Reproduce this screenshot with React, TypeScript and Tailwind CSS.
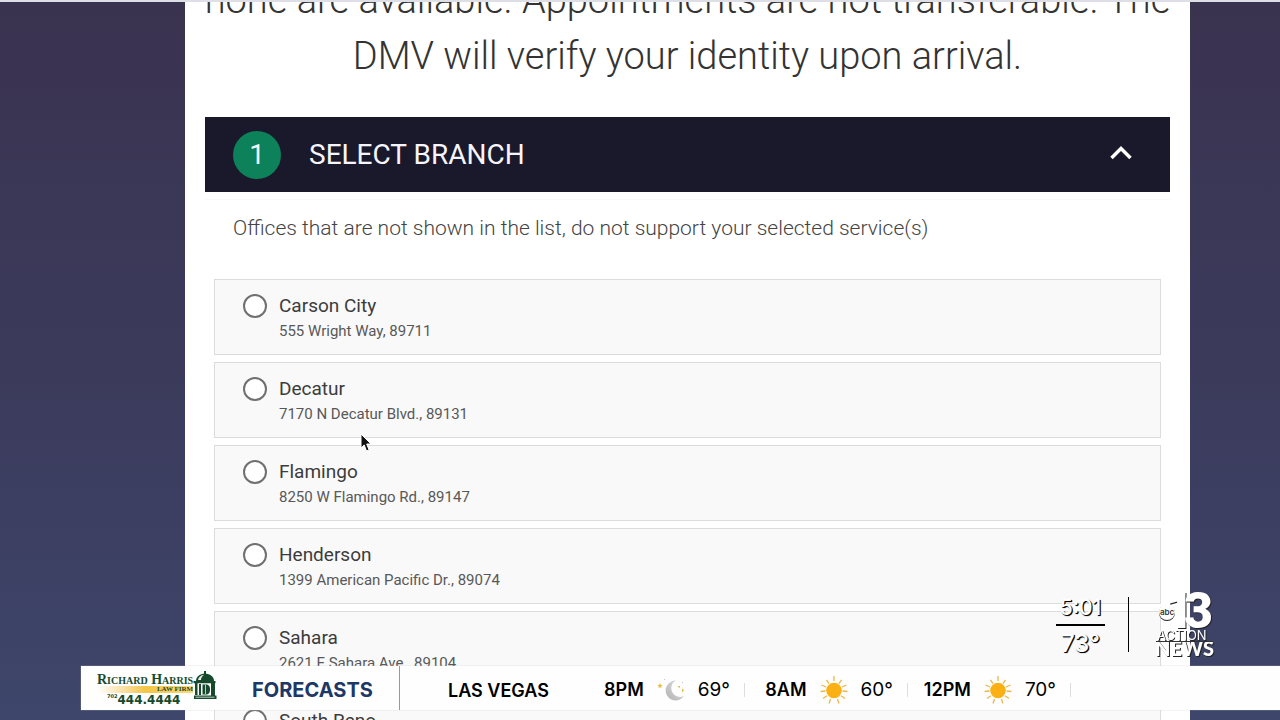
type Branch = { id: string; name: string; address: string };
type Forecast = { time: string; temp: string; icon: 'moon' | 'sun' };

const branches: Branch[] = [
  { id: 'carson', name: 'Carson City', address: '555 Wright Way, 89711' },
  { id: 'decatur', name: 'Decatur', address: '7170 N Decatur Blvd., 89131' },
  { id: 'flamingo', name: 'Flamingo', address: '8250 W Flamingo Rd., 89147' },
  { id: 'henderson', name: 'Henderson', address: '1399 American Pacific Dr., 89074' },
  { id: 'sahara', name: 'Sahara', address: '2621 E Sahara Ave., 89104' },
  { id: 'south-reno', name: 'South Reno', address: '' },
];

const forecasts: Forecast[] = [
  { time: '8PM', temp: '69°', icon: 'moon' },
  { time: '8AM', temp: '60°', icon: 'sun' },
  { time: '12PM', temp: '70°', icon: 'sun' },
];

function SunIcon() {
  return (
    <svg viewBox="0 0 28 28" className="size-7" aria-hidden="true">
      <g stroke="#e9b949" strokeWidth="1.3">
        <path d="M14 0v5M6.5 4l2.6 3.6M21.5 4l-2.6 3.6M1.5 9l4.5 2M26.500 9l-4.500 2M.5 15.500l5-.5M27.500 15.500l-5-.5M3 22.500l4-2.800M25 22.500l-4-2.800M9 27.500l1.600-4.500M19 27.500l-1.600-4.500" />
      </g>
      <circle cx="14" cy="14.500" r="7.800" fill="#fbb116" />
    </svg>
  );
}

function MoonIcon() {
  return (
    <svg viewBox="0 0 28 24" className="h-6 w-7" aria-hidden="true">
      <defs>
        <linearGradient id="moon" x1="1" y1="0" x2="0" y2="1">
          <stop offset="0" stopColor="#e2e2e2" />
          <stop offset="1" stopColor="#b2b2b2" />
        </linearGradient>
      </defs>
      <path d="M19 2.500A10 10 0 1 0 27 18A8.500 8.500 0 0 1 19 2.500Z" fill="url(#moon)" />
      <path d="M3 5l.7 1.700 1.900.2-1.400 1.300.4 1.900L3 9.200l-1.600.9.4-1.900L.4 6.900l1.900-.2Z" fill="#e6bf42" />
      <path d="M20.500 8h2.500l-.5 2.200ZM25.500 10.500l1.300 1-.8 2.800-1.200-1Z" fill="#dcc030" />
      <path d="M7 1.500h1M25 4.500h1" stroke="#c4c4c4" />
    </svg>
  );
}

function DomeIcon() {
  return (
    <svg viewBox="0 0 24 30" className="-mt-1 h-[30px] w-6 shrink-0" aria-hidden="true">
      <path d="M11 4V1h2v3" fill="#174a2c" />
      <path d="M3 11C3 6.500 7 3.800 12 3.800S21 6.500 21 11Z" fill="#174a2c" />
      <path d="M5 10c.5-3 3-5 6-5-2 1.200-3 3-3 5Z" fill="#e8efe9" />
      <path d="M.5 11h22v2.300H.5ZM2 13h2.500v12H2ZM18 13h4v13h-4ZM6 14h2v11H6ZM1 25.500h22.500V29H1Z" fill="#174a2c" />
      <path d="M9.500 14.500h3c3.500 0 4.500 2 4.500 5s-1 5-4.500 5h-3Z" fill="#174a2c" />
      <path d="M2.500 27.200h19M12.500 15v9" stroke="#e8efe9" strokeWidth=".8" />
    </svg>
  );
}

function BranchOption({ branch }: { branch: Branch }) {
  return (
    <li className="flex min-h-[76px] gap-3 border border-[#dcdcdc] bg-[#f9f9f9] px-7 pt-[14px]">
      <input
        type="radio"
        id={branch.id}
        name="branch"
        className="size-6 shrink-0 appearance-none rounded-full border-2 border-[#707070] bg-white checked:border-8"
      />
      <label htmlFor={branch.id} className="flex flex-col text-[#3c3c3c]">
        <span className="text-[19px] leading-6">{branch.name}</span>
        <span className="text-[15px] leading-[26px] text-[#585858]">{branch.address}</span>
      </label>
    </li>
  );
}

function StationBug() {
  return (
    <aside className="absolute right-[65px] bottom-[62px] flex items-center font-['Inter',sans-serif] text-white">
      <div className="flex w-[49px] flex-col items-center text-[21px] leading-6 font-medium [text-shadow:1px_1px_1px_#000,1px_1px_0_#222]">
        <time className="pt-1">5:01</time>
        <hr className="mt-1 mb-[6px] w-full border-t-2 border-black" />
        <span className="text-[24px]">73°</span>
      </div>
      <span className="mr-[26px] ml-[23px] h-[55px] w-px bg-black" />
      <svg viewBox="0 0 60 68" className="h-[68px] w-[60px] overflow-visible" role="img" aria-label="abc 13 Action News">
        <g fill="#fff" className="[filter:drop-shadow(1px_1px_0.5px_#222)]">
          <g fontFamily="Roboto, sans-serif" fontWeight="900" fontSize="50">
            <text x="10" y="38">1</text>
            <text x="29" y="38">3</text>
          </g>
          <text x="2" y="50" fontFamily="Inter, sans-serif" fontSize="13">ACTION</text>
          <text x="0" y="66" fontFamily="Lato, sans-serif" fontWeight="900" fontSize="20">NEWS</text>
        </g>
        <circle cx="12" cy="22" r="8" fill="#fff" className="[filter:drop-shadow(0_1px_0.5px_#222)]" />
        <path d="M1 51.500h57" stroke="#333" />
        <text x="5" y="25" fontFamily="Inter, sans-serif" fontSize="8" fontWeight="600" fill="#333">abc</text>
      </svg>
    </aside>
  );
}

function Ticker() {
  return (
    <footer className="absolute right-0 bottom-[10px] left-[81px] flex h-[44px] items-center bg-[#fefefe] font-['Inter',sans-serif] text-black shadow-[0_0_1px_#bbb]">
      <div className="flex w-[159px] items-start pt-1 pl-4">
        <div className="flex flex-col font-['Liberation_Serif',serif] font-bold text-[#174a2c]">
          <span className="text-[14px] leading-3 whitespace-nowrap [font-variant:small-caps]">Richard Harris</span>
          <span className="bg-linear-to-r from-white via-[#f3c545] to-[#f8d979] text-right text-[7px] leading-[7px]">LAW FIRM</span>
          <span className="flex pl-[10px] font-['DejaVu_Sans',sans-serif] text-[12px] leading-[14px]">
            <sup className="text-[5px] leading-3">702</sup>444.4444
          </span>
        </div>
        <DomeIcon />
      </div>
      <h2 className="flex h-full w-[160px] items-center border-r border-[#999] pt-1 pl-3 text-[20px] font-bold text-[#1d3767]">FORECASTS</h2>
      <strong className="w-[182px] pt-1 pl-12 text-[18px] font-semibold">LAS VEGAS</strong>
      <ul className="flex items-center pt-1">
        {forecasts.map((item) => (
          <li key={item.time} className="flex w-[163px] items-center justify-end gap-[13px] border-r border-[#ddd] pr-[14px] text-[18px] leading-[14px]">
            <strong className="font-semibold">{item.time}</strong>
            <span className="-my-2">{item.icon === 'moon' ? <MoonIcon /> : <SunIcon />}</span>
            <span className="text-[19px]">{item.temp}</span>
          </li>
        ))}
      </ul>
    </footer>
  );
}

export default function App() {
  return (
    <div className="relative h-screen overflow-hidden border-t-2 border-[#dedee6] bg-linear-to-b from-[#3a3350] via-[#3b3a5b] to-[#3e466b] pr-[90px] pl-[185px] font-['Roboto',sans-serif]">
      <main className="min-h-full bg-white px-5">
        <div className="-mx-3 flex h-[115px] items-end justify-center overflow-hidden pb-[33px]">
          <p className="text-center text-[38px] leading-[56px] font-light text-[#333]">
            none are available. Appointments are not transferable. The
            <br />
            DMV will verify your identity upon arrival.
          </p>
        </div>
        <section>
          <h1>
            <button type="button" aria-expanded="true" className="flex h-[75px] w-full items-center bg-[#1a182b] pr-[37px] pl-7 text-[28px] text-[#f5f5fb]">
              <span className="mr-7 flex size-12 items-center justify-center rounded-full bg-[#0d8159]">1</span>
              SELECT BRANCH
              <svg viewBox="0 0 24 20" className="ml-auto h-5 w-6" fill="none" stroke="#fff" strokeWidth="3.500" aria-hidden="true">
                <path d="M2.500 13 12 3.500 21.500 13" />
              </svg>
            </button>
          </h1>
          <div className="mt-[7px] border-t border-[#f9f9f9] px-[9px]">
            <p className="px-[19px] pt-[14px] text-[21px] leading-7 font-light text-[#444]">
              Offices that are not shown in the list, do not support your selected service(s)
            </p>
            <ul className="mt-[37px] flex flex-col gap-[7px]">
              {branches.map((branch) => (
                <BranchOption key={branch.id} branch={branch} />
              ))}
            </ul>
          </div>
        </section>
      </main>
      <svg viewBox="0 0 12 20" className="absolute top-[431px] left-[360px] h-5 w-3" aria-hidden="true">
        <path d="M1 1v14l3.200-3 2.300 6 2.600-1.100L6.700 11H11Z" fill="#111" stroke="#fff" />
      </svg>
      <StationBug />
      <Ticker />
    </div>
  );
}
